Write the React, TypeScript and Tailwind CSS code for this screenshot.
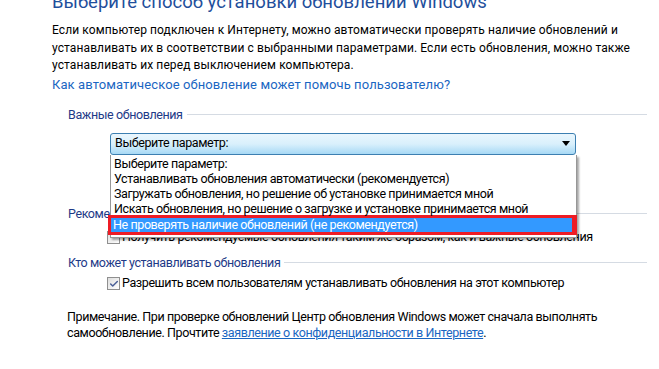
import { Check } from 'lucide-react';

const font = { fontFamily: 'Roboto, "Noto Sans", sans-serif' };

const options = [
  'Выберите параметр:',
  'Устанавливать обновления автоматически (рекомендуется)',
  'Загружать обновления, но решение об установке принимается мной',
  'Искать обновления, но решение о загрузке и установке принимается мной',
];

function GroupHeader({ title }: { title: string }) {
  return (
    <div className="flex items-center gap-1 pl-[68px] pr-[12px] h-[18px]">
      <span className="text-[12.5px] tracking-[-0.4px] text-[#1e3a87] whitespace-nowrap leading-none">{title}</span>
      <div className="flex-1 h-px bg-[#d5dbe3] mt-[-2px]" />
    </div>
  );
}

function Box({ checked }: { checked?: boolean }) {
  return (
    <span className="w-[13px] h-[13px] border border-[#8f8f8f] bg-gradient-to-br from-[#dedede] to-white flex items-center justify-center shrink-0">
      {checked && <Check size={10} strokeWidth={3.5} className="text-[#4a5f97]" />}
    </span>
  );
}

export default function App() {
  return (
    <div className="w-[659px] h-[369px] bg-white overflow-hidden relative" style={font}>
      <div className="pl-[52px] mt-[-8px]">
        <h1 className="text-[18.5px] leading-[21px] text-[#1f4f9c] whitespace-nowrap">
          Выберите способ установки обновлений Windows
        </h1>
        <p className="mt-[9px] text-[12px] leading-[17.5px] text-black tracking-[0.1px] whitespace-nowrap">
          Если компьютер подключен к Интернету, можно автоматически проверять наличие обновлений и
          <br />
          устанавливать их в соответствии с выбранными параметрами. Если есть обновления, можно также
          <br />
          устанавливать их перед выключением компьютера.
        </p>
        <a className="block mt-[1px] text-[13px] leading-[17px] text-[#1a66c2] tracking-[0.1px]">
          Как автоматическое обновление может помочь пользователю?
        </a>
      </div>

      <div className="mt-[14px]">
        <GroupHeader title="Важные обновления" />
        <div className="pl-[110px] pr-[83px] mt-[8px]">
          <div className="h-[22px] rounded-[3px] border border-[#3c7fb1] bg-gradient-to-b from-[#eaf6fd] via-[#d9f0fc] to-[#a7d9f5] flex items-center pl-[4px] pr-[5px]">
            <span className="flex-1 text-[12.5px] tracking-[-0.4px] leading-none text-black">Выберите параметр:</span>
            <svg width="8" height="5" viewBox="0 0 8 5">
              <path d="M0 0h8L4 5z" fill="#000" />
            </svg>
          </div>
        </div>
      </div>

      <div className="mt-[51px]">
        <GroupHeader title="Рекомендуемые обновления" />
        <div className="flex items-center gap-[2px] pl-[107px] mt-[6px] h-[16px]">
          <Box />
          <span className="text-[12.5px] tracking-[-0.4px] leading-none text-black whitespace-nowrap">
            Получить рекомендуемые обновления таким же образом, как и важные обновления
          </span>
        </div>
      </div>

      <div className="mt-[9px]">
        <GroupHeader title="Кто может устанавливать обновления" />
        <div className="flex items-center gap-[2px] pl-[107px] mt-[3px] h-[16px]">
          <Box checked />
          <span className="text-[12.5px] tracking-[-0.4px] leading-none text-black whitespace-nowrap">
            Разрешить всем пользователям устанавливать обновления на этот компьютер
          </span>
        </div>
      </div>

      <p className="pl-[67px] mt-[17px] text-[12.5px] tracking-[-0.4px] leading-[16px] text-black whitespace-nowrap">
        Примечание. При проверке обновлений Центр обновления Windows может сначала выполнять
        <br />
        самообновление. Прочтите{' '}
        <a className="text-[#1a66c2] underline">заявление о конфиденциальности в Интернете</a>.
      </p>

      <div className="absolute left-[110px] top-[155px] w-[467px] bg-white border border-[#979797] border-t-0 shadow-[2px_2px_2px_rgba(0,0,0,0.35)] pt-[2px] pb-[2px]">
        {options.map(o => (
          <div key={o} className="h-[15px] flex items-center pl-[3px] text-[12.5px] tracking-[-0.4px] leading-none text-black whitespace-nowrap">
            {o}
          </div>
        ))}
        <div className="border-y-[3px] border-l-[3px] border-r-[5px] border-[#ee1c25] ml-[-3px] mr-[-1px] mt-[-2px]">
          <div className="h-[14px] bg-[#3399ff] flex items-center pl-[2px] text-[12.5px] tracking-[-0.4px] leading-none text-white whitespace-nowrap">
            Не проверять наличие обновлений (не рекомендуется)
          </div>
        </div>
      </div>
    </div>
  );
}
